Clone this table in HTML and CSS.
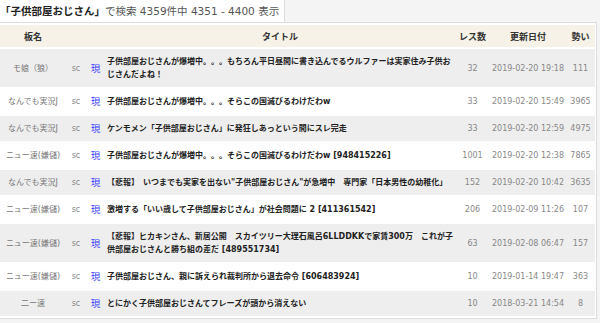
FILE: index.html
```html
<!DOCTYPE html>
<html lang="ja">
<head>
<meta charset="utf-8">
<title>検索結果</title>
<link rel="stylesheet" href="styles.css">
</head>
<body>
<div class="search"><b class="q">「子供部屋おじさん」</b>で検索 4359件中 4351 - 4400 表示</div>
<div class="board">
<table class="list">
<colgroup>
<col class="c-board"><col class="c-sc"><col class="c-gen"><col class="c-title"><col class="c-res"><col class="c-date"><col class="c-ik">
</colgroup>
<thead>
<tr><th>板名</th><th></th><th></th><th>タイトル</th><th>レス数</th><th>更新日付</th><th>勢い</th></tr>
</thead>
<tbody>
<tr class="gray"><td class="bd">モ娘（狼）</td><td class="sc">sc</td><td class="gen">現</td><td class="tt">子供部屋おじさんが爆増中。。。もちろん平日昼間に書き込んでるウルファーは実家住み子供おじさんだよね！</td><td class="num">32</td><td class="num">2019-02-20 19:18</td><td class="num">111</td></tr>
<tr><td class="bd">なんでも実況J</td><td class="sc">sc</td><td class="gen">現</td><td class="tt">子供部屋おじさんが爆増中。。。そらこの国滅びるわけだわw</td><td class="num">33</td><td class="num">2019-02-20 15:49</td><td class="num">3965</td></tr>
<tr class="gray"><td class="bd">なんでも実況J</td><td class="sc">sc</td><td class="gen">現</td><td class="tt">ケンモメン「子供部屋おじさん」に発狂しあっという間にスレ完走</td><td class="num">33</td><td class="num">2019-02-20 12:59</td><td class="num">4975</td></tr>
<tr><td class="bd">ニュー速(嫌儲)</td><td class="sc">sc</td><td class="gen">現</td><td class="tt">子供部屋おじさんが爆増中。。。そらこの国滅びるわけだわw [948415226]</td><td class="num">1001</td><td class="num">2019-02-20 12:38</td><td class="num">7865</td></tr>
<tr class="gray"><td class="bd">なんでも実況J</td><td class="sc">sc</td><td class="gen">現</td><td class="tt">【悲報】　いつまでも実家を出ない"子供部屋おじさん"が急増中　専門家「日本男性の幼稚化」</td><td class="num">152</td><td class="num">2019-02-20 10:42</td><td class="num">3635</td></tr>
<tr><td class="bd">ニュー速(嫌儲)</td><td class="sc">sc</td><td class="gen">現</td><td class="tt">激増する「いい歳して子供部屋おじさん」が社会問題に 2 [411361542]</td><td class="num">206</td><td class="num">2019-02-09 11:26</td><td class="num">107</td></tr>
<tr class="gray"><td class="bd">ニュー速(嫌儲)</td><td class="sc">sc</td><td class="gen">現</td><td class="tt">【悲報】ヒカキンさん、新居公開　スカイツリー大理石風呂6LLDDKKで家賃300万　これが子供部屋おじさんと勝ち組の差だ [489551734]</td><td class="num">63</td><td class="num">2019-02-08 06:47</td><td class="num">157</td></tr>
<tr><td class="bd">ニュー速(嫌儲)</td><td class="sc">sc</td><td class="gen">現</td><td class="tt">子供部屋おじさん、親に訴えられ裁判所から退去命令 [606483924]</td><td class="num">10</td><td class="num">2019-01-14 19:47</td><td class="num">363</td></tr>
<tr class="gray"><td class="bd">二ー速</td><td class="sc">sc</td><td class="gen">現</td><td class="tt">とにかく子供部屋おじさんてフレーズが頭から消えない</td><td class="num">10</td><td class="num">2018-03-21 14:54</td><td class="num">8</td></tr>
</tbody>
</table>
</div>
</body>
</html>
```
FILE: styles.css
```css
html, body {
  margin: 0;
  padding: 0;
}
body {
  background: #f4f4f4;
  font-family: "DejaVu Sans", "Noto Sans CJK JP", sans-serif;
  color: #222;
}
.search {
  width: fit-content;
  background: #fff;
  border-right: 1px solid #dcdcdc;
  height: 22px;
  line-height: 22px;
  font-size: 10.5px;
  color: #555;
  padding: 0 5px 0 0;
  white-space: nowrap;
}
.search .q {
  color: #222;
  font-weight: bold;
}
.board {
  width: 595px;
  margin-left: -2px;
  border: 1px solid #dcdcdc;
  padding: 0 1px;
  background: #fff;
}
.list {
  width: 100%;
  table-layout: fixed;
  border-collapse: separate;
  border-spacing: 0 2px;
}
.c-board { width: 66px; }
.c-sc { width: 20px; }
.c-gen { width: 19px; }
.c-title { width: 350px; }
.c-res { width: 35px; }
.c-date { width: 76px; }
.c-ik { width: 29px; }
.list th {
  background: #f6f2e7;
  height: 22px;
  padding: 0;
  font-size: 9px;
  font-weight: bold;
  color: #333;
  text-align: center;
}
.list td {
  padding: 6px 0;
  line-height: 13px;
  font-size: 8px;
  vertical-align: middle;
}
.list tr.gray td {
  background: #eeeeee;
}
.bd {
  text-align: center;
  color: #777;
  white-space: nowrap;
}
.sc {
  text-align: center;
  color: #888;
}
.gen {
  text-align: center;
  color: #3a3aff;
  font-size: 9.5px !important;
}
.tt {
  font-weight: bold;
  color: #222;
  padding-left: 2px !important;
}
.num {
  text-align: center;
  color: #888;
  white-space: nowrap;
}
```
